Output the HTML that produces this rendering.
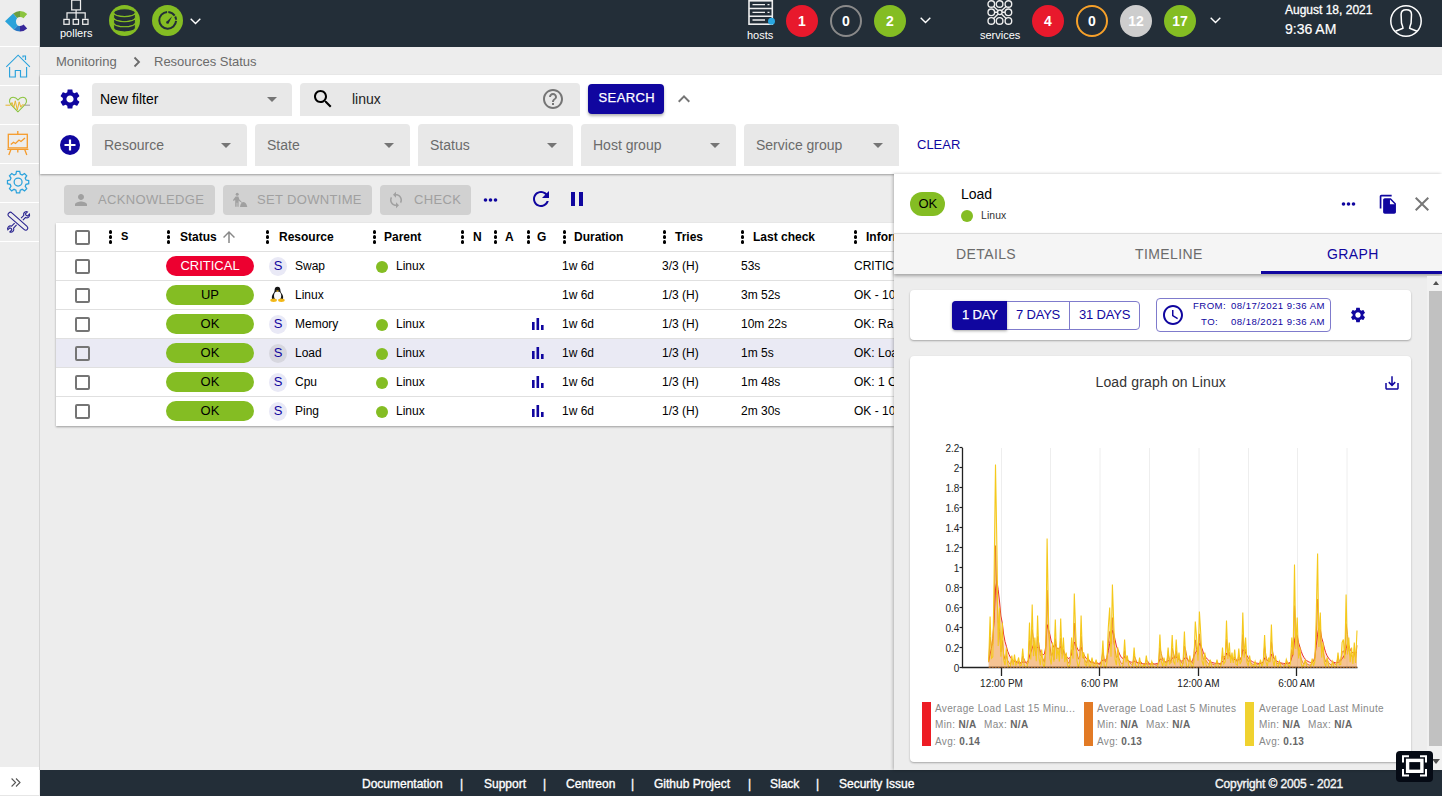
<!DOCTYPE html>
<html><head><meta charset="utf-8">
<style>
*{box-sizing:border-box;margin:0;padding:0}
html,body{width:1442px;height:796px;overflow:hidden;background:#ededed;font-family:"Liberation Sans",sans-serif;color:#000}
.a{position:absolute}
.t{position:absolute;white-space:nowrap;line-height:1}
#top{left:40px;top:0;width:1402px;height:47px;background:#232e38}
#side{left:0;top:0;width:40px;height:770px;background:#ededed;border-right:1px solid #d6d6d6}
.sep{position:absolute;left:0;width:39px;height:1.3px;background:#fff}
.circ{position:absolute;border-radius:50%;color:#fff;font-weight:bold;font-size:14px;text-align:center}
#filters{left:40px;top:75px;width:1402px;height:99px;background:#fff;box-shadow:0 1px 2px rgba(0,0,0,.35)}
.inp{position:absolute;background:#e8e8e8;border-radius:4px 4px 0 0}
.caret{position:absolute;width:0;height:0;border-left:5px solid transparent;border-right:5px solid transparent;border-top:5px solid #757575}
.btn{position:absolute;background:#d1d1d1;border-radius:4px;color:#a6a6a6;font-size:13px}
#table{left:56px;top:223px;width:838px;height:203px;background:#fff;box-shadow:0 1px 2px rgba(0,0,0,.35)}
.row{position:absolute;left:0;width:838px;height:29px;border-top:1px solid #e0e0e0}
.cb{position:absolute;width:15px;height:15px;border:2px solid #757575;border-radius:2px}
.hd{position:absolute;font-weight:bold;font-size:12px;line-height:1}
.dots{position:absolute;width:4px;height:14px}
.dots i{position:absolute;left:0;width:3.3px;height:3.3px;border-radius:50%;background:#000}
.chip{position:absolute;left:110px;width:88px;height:20px;border-radius:10px;text-align:center;font-size:13px;line-height:20px}
.sav{position:absolute;width:18px;height:19px;border-radius:50%;background:#e9e9f6;color:#10069f;font-size:13px;text-align:center;line-height:17.3px}
.cell{position:absolute;font-size:12px;line-height:1;color:#000;white-space:nowrap}
.gdot{position:absolute;width:12px;height:12px;border-radius:50%;background:#84bd23}
#panel{left:894px;top:174px;width:548px;height:596px;background:#ededed;box-shadow:-1px 0 3px rgba(0,0,0,.25)}
.lg{font-size:10px;color:#888;letter-spacing:.35px}
.lg b{color:#666}
.ft{font-size:12px;color:#fff;-webkit-text-stroke:.35px #fff}
.ax{font-size:10px;color:#222}
#footer{left:40px;top:770px;width:1402px;height:26px;background:#232e38}
</style></head><body>

<!-- sidebar -->
<div id="side" class="a">
  <div class="sep" style="top:45.8px"></div>
  <div class="sep" style="top:84.8px"></div>
  <div class="sep" style="top:123.8px"></div>
  <div class="sep" style="top:162.8px"></div>
  <div class="sep" style="top:201.8px"></div>
  <div class="sep" style="top:240.8px"></div>
</div>
<svg class="a" style="left:0;top:46px" width="40" height="40" viewBox="0 0 40 40">
  <g fill="none" stroke="#2aa2dc" stroke-width="1.15">
    <path d="M6.3 20.8 L18.1 9.2 L29.9 20.8"/>
    <path d="M23 11.5 V10 H25.5 V14"/>
    <path d="M9.6 21 V31 H15.3 V24.5 H20.5 V31 H26.6 V21"/>
  </g>
</svg>
<svg class="a" style="left:0;top:86px" width="40" height="40" viewBox="0 0 40 40">
  <path d="M18 25.8 L10.8 18.5 C8.2 15.5 9.6 11.2 13.2 11.2 C15.6 11.2 17 12.6 18 14 C19 12.6 20.4 11.2 22.8 11.2 C26.4 11.2 27.8 15.5 25.2 18.5 Z" fill="none" stroke="#8cc43f" stroke-width="1.1"/>
  <path d="M5.5 19.2 H10.3 L12 16.5 L13.8 21.5 L15.3 14.8 L17.3 24 L19.2 15.8 L20.8 21.2 L22.3 18.8 L24.5 19.2" fill="none" stroke="#e6b52c" stroke-width="1"/>
  <path d="M24.5 19.2 H30" fill="none" stroke="#a0a0a0" stroke-width="1.1"/>
</svg>
<svg class="a" style="left:0;top:124px" width="40" height="40" viewBox="0 0 40 40">
  <g fill="none" stroke="#f59b2b" stroke-width="1.3">
    <rect x="8.3" y="10.3" width="19" height="13.6"/>
    <path d="M17.8 7 V10.3 M7.2 25.3 H28.4 M11 25.3 L8.8 31 M24.6 25.3 L26.8 31 M17.8 25.3 V28.5"/>
    <path d="M10.8 20.5 L13.5 18.3 L15.5 19.5 L19 16 L21 17.5 L25 14"/>
  </g>
</svg>
<svg class="a" style="left:0;top:163px" width="40" height="40" viewBox="0 0 40 40">
  <g transform="translate(18.1 19.1) scale(0.9) translate(-18.1 -20.2)"><g fill="none" stroke="#2aa2dc" stroke-width="1.4">
    <path d="M16.3 8.3 H19.9 L20.5 11.3 L22.6 12.3 L25.2 10.6 L27.7 13.1 L26 15.7 L26.9 17.9 L29.9 18.5 V22 L26.9 22.6 L26 24.8 L27.7 27.4 L25.2 29.9 L22.6 28.2 L20.5 29.1 L19.9 32.1 H16.3 L15.7 29.1 L13.6 28.2 L11 29.9 L8.5 27.4 L10.2 24.8 L9.3 22.6 L6.3 22 V18.5 L9.3 17.9 L10.2 15.7 L8.5 13.1 L11 10.6 L13.6 12.3 L15.7 11.3 Z"/>
    <circle cx="18.1" cy="20.2" r="4.4"/>
  </g>
</g></svg>
<svg class="a" style="left:0;top:202px" width="40" height="40" viewBox="0 0 40 40">
  <g transform="translate(18.3 19.3) scale(0.92) translate(-18.5 -18.5)"><g fill="none" stroke="#2b2590" stroke-width="1.2">
    <path d="M8.2 9.5 C7 10.5 7 11.8 8 12.8 L25 27.5 C26.2 28.5 27.5 28.3 28.3 27.3 C29.2 26.3 29 25 28 24 L11.5 9.3 C10.5 8.3 9.2 8.5 8.2 9.5 Z"/>
    <path d="M21.5 15 L24.5 12 C24 10.5 24.5 9 25.8 8.3 C26.8 7.8 27.8 7.9 28.5 8.3 L26.2 10.5 L27 12 L28.6 12.8 L30.6 10.6 C31 11.7 30.8 13 29.8 13.9 C28.8 14.8 27.5 15 26.3 14.4 L23.5 17.2"/>
    <path d="M14.5 20.5 L11.2 23.8 C10 23.3 8.6 23.6 7.7 24.5 C6.8 25.5 6.6 26.8 7.1 27.8 L9.2 25.7 L10.8 26.3 L11.5 27.9 L9.4 30 C10.5 30.5 11.8 30.3 12.7 29.4 C13.6 28.5 13.9 27.2 13.4 26 L16.6 22.5"/>
  </g>
</g></svg>
<div class="a" style="left:0;top:767px;width:39px;height:29px;background:#fff;border-bottom:1px solid #e6e6e6"></div>

<!-- top bar -->
<div id="top" class="a"></div>
<!-- logo -->
<svg class="a" style="left:0;top:0" width="36" height="40" viewBox="0 0 36 40">
  <path d="M5 21.3 L13.2 13.6 L17.2 18 Q15.9 19.6 15.9 21.5 Q15.9 23.8 17.8 25.4 L13.8 29.8 Z" fill="#2aa3da"/>
  <path d="M13.2 13.6 Q16.3 11.2 20 10.9 L20 17 Q18.3 17.1 17.2 18 Z" fill="#6a9e3f"/>
  <path d="M20 10.9 Q24.2 10.9 27.2 13.9 L23.5 18.3 Q22.1 17 20 17 Z" fill="#8cc43f"/>
  <path d="M17.8 25.4 Q18.8 26 20 26.1 L20 31.6 Q16.5 31.6 13.8 29.8 Z" fill="#2777c4"/>
  <path d="M20 26.1 Q22.3 26 23.6 24.6 L27.2 28.6 Q24.2 31.6 20 31.6 Z" fill="#37289a"/>
</svg>
<!-- pollers -->
<svg class="a" style="left:62px;top:0" width="28" height="26" viewBox="0 0 28 26">
  <g fill="none" stroke="#eeeeee" stroke-width="1.25">
    <rect x="9.7" y="0.1" width="8.8" height="9.8"/>
    <path d="M14.1 10 V12.8 M5 18.8 V12.8 H23.2 V18.8 M14.1 12.8 V18.8"/>
    <rect x="1.9" y="19.4" width="5.3" height="4.9"/>
    <rect x="11.2" y="19.4" width="5.3" height="4.9"/>
    <rect x="20.7" y="19.4" width="5.3" height="4.9"/>
  </g>
</svg>
<div class="t" style="left:60px;top:28px;font-size:11px;color:#fff">pollers</div>
<!-- db -->
<div class="circ" style="left:109px;top:5px;width:31px;height:31px;background:#84bd23"></div>
<svg class="a" style="left:109px;top:5px" width="31" height="31" viewBox="0 0 31 31"><g fill="#232e38" stroke="#84bd23" stroke-width="1.05"><ellipse cx="15.5" cy="7.7" rx="10.9" ry="3.9"/><path d="M4.6 7.7 A10.9 3.9 0 0 0 26.4 7.7 L26.4 12.8 A10.9 3.9 0 0 1 4.6 12.8 Z"/><path d="M4.6 12.8 A10.9 3.9 0 0 0 26.4 12.8 L26.4 17.9 A10.9 3.9 0 0 1 4.6 17.9 Z"/><path d="M4.6 17.9 A10.9 3.9 0 0 0 26.4 17.9 L26.4 23.1 A10.9 3.9 0 0 1 4.6 23.1 Z"/></g></svg>
<!-- gauge -->
<div class="circ" style="left:152px;top:5px;width:31px;height:31px;background:#84bd23"></div>
<svg class="a" style="left:152px;top:5px" width="31" height="31" viewBox="0 0 31 31"><path d="M16.29 6.92 A8.4 8.4 0 0 1 22.66 10.60 M23.18 11.49 A8.4 8.4 0 0 1 24.08 14.71 M24.08 15.89 A8.4 8.4 0 1 1 15.11 6.92 " fill="none" stroke="#232e38" stroke-width="2"/><path d="M14.3 16.9 L20.2 11.2 L16.6 18.4 Z" fill="#232e38"/><circle cx="15.5" cy="17.5" r="1.3" fill="#232e38"/></svg>
<svg class="a" style="left:190px;top:18px" width="11" height="7" viewBox="0 0 11 7"><path d="M0.7 0.7 L5.5 5.5 L10.3 0.7" fill="none" stroke="#fff" stroke-width="1.4"/></svg>

<!-- hosts -->
<svg class="a" style="left:746px;top:0" width="30" height="26" viewBox="0 0 30 26">
  <g fill="none" stroke="#eeeeee" stroke-width="1.6">
    <rect x="3" y="0.8" width="23.3" height="23.4"/>
    <path d="M3 8.5 H26.5 M3 16.3 H26.5"/>
  </g>
  <g stroke="#eeeeee" stroke-width="1.3">
    <path d="M6.5 4.7 H19 M6.5 12.4 H19 M6.5 20 H19"/>
    <path d="M21.5 4.7 H23.5 M21.5 12.4 H23.5"/>
  </g>
  <circle cx="25.5" cy="21.2" r="3.5" fill="#29a6e0"/>
</svg>
<div class="t" style="left:747px;top:30px;font-size:11px;color:#fff">hosts</div>
<div class="circ" style="left:786px;top:5px;width:32px;height:32px;background:#e8192c;line-height:32px">1</div>
<div class="circ" style="left:830px;top:5px;width:32px;height:32px;border:2px solid #8a8a8a;line-height:29px">0</div>
<div class="circ" style="left:874px;top:5px;width:32px;height:32px;background:#84bd23;line-height:32px">2</div>
<svg class="a" style="left:920px;top:17px" width="11" height="7" viewBox="0 0 11 7"><path d="M0.7 0.7 L5.5 5.5 L10.3 0.7" fill="none" stroke="#fff" stroke-width="1.4"/></svg>

<!-- services -->
<svg class="a" style="left:985px;top:0" width="30" height="26" viewBox="0 0 30 26">
  <g fill="none" stroke="#eeeeee" stroke-width="1.4">
    <circle cx="6.3" cy="4" r="3.3"/><circle cx="14.6" cy="4" r="3.3"/><circle cx="23.4" cy="4" r="3.3"/>
    <circle cx="6.3" cy="12.3" r="3.3"/><circle cx="23.4" cy="12.3" r="3.3"/>
    <circle cx="6.3" cy="20.9" r="3.3"/><circle cx="14.6" cy="20.9" r="3.3"/><circle cx="23.4" cy="20.9" r="3.3"/>
    <circle cx="14.8" cy="12.3" r="2.3"/>
    <path d="M8.6 6.5 L12.9 10.5 M21.1 6.5 L16.7 10.5 M9.6 12.3 H12.5 M20.1 12.3 H17.1 M8.6 18.5 L12.9 14.2 M21.1 18.5 L16.7 14.2"/>
  </g>
</svg>
<div class="t" style="left:980px;top:30px;font-size:11px;color:#fff">services</div>
<div class="circ" style="left:1032px;top:5px;width:32px;height:32px;background:#e8192c;line-height:32px">4</div>
<div class="circ" style="left:1076px;top:5px;width:32px;height:32px;border:2px solid #f7a12a;line-height:29px">0</div>
<div class="circ" style="left:1120px;top:5px;width:32px;height:32px;background:#cdcdcd;line-height:32px">12</div>
<div class="circ" style="left:1164px;top:5px;width:32px;height:32px;background:#84bd23;line-height:32px">17</div>
<svg class="a" style="left:1210px;top:17px" width="11" height="7" viewBox="0 0 11 7"><path d="M0.7 0.7 L5.5 5.5 L10.3 0.7" fill="none" stroke="#fff" stroke-width="1.4"/></svg>

<!-- date -->
<div class="t" style="left:1285px;top:3.6px;font-size:12px;color:#fff;-webkit-text-stroke:.3px #fff">August 18, 2021</div>
<div class="t" style="left:1285px;top:22px;font-size:14px;color:#fff;-webkit-text-stroke:.2px #fff">9:36 AM</div>
<!-- user -->
<svg class="a" style="left:1389px;top:4px" width="34" height="34" viewBox="0 0 34 34">
  <circle cx="17" cy="17" r="15.2" fill="none" stroke="#fff" stroke-width="1.5"/>
  <path d="M6.5 27.3 L14 24.2 C14 22.5 13 21 12.5 19 L12.1 10.5 C12.1 7.3 14 5.8 17.3 5.8 C20.6 5.8 22.5 7.3 22.5 10.5 L22.1 19 C21.6 21 20.6 22.5 20.6 24.2 L28.1 27.3" fill="none" stroke="#fff" stroke-width="1.5" stroke-linejoin="round"/>
</svg>

<!-- breadcrumb -->
<div class="t" style="left:56px;top:55px;font-size:13px;color:#6b6b6b">Monitoring</div>
<div class="t" style="left:154px;top:55px;font-size:13px;color:#6b6b6b">Resources Status</div>

<!-- filters -->
<div id="filters" class="a"></div>
<svg class="a" style="left:132.5px;top:55.5px" width="8" height="12" viewBox="0 0 8 12"><path d="M1.5 1.5 L6 6 L1.5 10.5" fill="none" stroke="#6b6b6b" stroke-width="1.8"/></svg>
<!-- gear -->
<svg class="a" style="left:58px;top:87px" width="24" height="24" viewBox="0 0 24 24"><path fill="#10069f" d="M19.14 12.94c.04-.3.06-.61.06-.94 0-.32-.02-.64-.07-.94l2.03-1.58c.18-.14.23-.41.12-.61l-1.92-3.32c-.12-.22-.37-.29-.59-.22l-2.39.96c-.5-.38-1.03-.7-1.62-.94l-.36-2.54c-.04-.24-.24-.41-.48-.41h-3.84c-.24 0-.43.17-.47.41l-.36 2.54c-.59.24-1.13.57-1.62.94l-2.39-.96c-.22-.08-.47 0-.59.22L2.74 8.87c-.12.21-.08.47.12.61l2.03 1.58c-.05.3-.09.63-.09.94s.02.64.07.94l-2.03 1.58c-.18.14-.23.41-.12.61l1.92 3.32c.12.22.37.29.59.22l2.39-.96c.5.38 1.03.7 1.62.94l.36 2.54c.05.24.24.41.48.41h3.84c.24 0 .44-.17.47-.41l.36-2.54c.59-.24 1.13-.56 1.62-.94l2.39.96c.22.08.47 0 .59-.22l1.92-3.32c.12-.22.07-.47-.12-.61l-2.01-1.58zM12 15.6c-1.98 0-3.6-1.62-3.6-3.6s1.62-3.6 3.6-3.6 3.6 1.62 3.6 3.6-1.62 3.6-3.6 3.6z"/></svg>
<div class="inp" style="left:92px;top:83px;width:200px;height:33px"></div>
<div class="t" style="left:100px;top:92px;font-size:14px;color:#000">New filter</div>
<div class="caret" style="left:267px;top:97px"></div>
<div class="inp" style="left:300px;top:83px;width:280px;height:33px"></div>
<svg class="a" style="left:311px;top:87px" width="24" height="24" viewBox="0 0 24 24"><path fill="#000" d="M15.5 14h-.79l-.28-.27C15.41 12.59 16 11.11 16 9.5 16 5.91 13.09 3 9.5 3S3 5.91 3 9.5 5.91 16 9.5 16c1.61 0 3.09-.59 4.23-1.57l.27.28v.79l5 4.99L20.49 19l-4.99-5zm-6 0C7.01 14 5 11.99 5 9.5S7.01 5 9.5 5 14 7.01 14 9.5 11.99 14 9.5 14z"/></svg>
<div class="t" style="left:352px;top:92px;font-size:14px;color:#222">linux</div>
<svg class="a" style="left:541px;top:87px" width="24" height="24" viewBox="0 0 24 24"><path fill="#757575" d="M11 18h2v-2h-2v2zm1-16C6.48 2 2 6.48 2 12s4.48 10 10 10 10-4.48 10-10S17.52 2 12 2zm0 18c-4.41 0-8-3.59-8-8s3.59-8 8-8 8 3.59 8 8-3.59 8-8 8zm0-14c-2.21 0-4 1.79-4 4h2c0-1.1.9-2 2-2s2 .9 2 2c0 2-3 1.75-3 5h2c0-2.25 3-2.5 3-5 0-2.21-1.79-4-4-4z"/></svg>
<div class="a" style="left:588px;top:84px;width:76px;height:30px;background:#10069f;border-radius:4px;box-shadow:0 2px 3px rgba(0,0,0,.3)"></div>
<div class="t" style="left:598.5px;top:91.2px;font-size:13px;color:#fff;letter-spacing:.4px;-webkit-text-stroke:.25px #fff">SEARCH</div>
<svg class="a" style="left:672px;top:87px" width="24" height="24" viewBox="0 0 24 24"><path fill="#757575" d="M7.41 15.41L12 10.83l4.59 4.58L18 14l-6-6-6 6z"/></svg>

<!-- plus -->
<div class="a" style="left:60px;top:135px;width:20px;height:20px;border-radius:50%;background:#10069f"></div>
<svg class="a" style="left:60px;top:135px" width="20" height="20" viewBox="0 0 20 20"><path d="M10 4.5 V15.5 M4.5 10 H15.5" stroke="#fff" stroke-width="2.2"/></svg>
<div class="inp" style="left:92px;top:124px;width:155px;height:42px"></div>
<div class="t" style="left:104px;top:138px;font-size:14px;color:#6b6b6b">Resource</div>
<div class="caret" style="left:221px;top:143px"></div>
<div class="inp" style="left:255px;top:124px;width:155px;height:42px"></div>
<div class="t" style="left:267px;top:138px;font-size:14px;color:#6b6b6b">State</div>
<div class="caret" style="left:384px;top:143px"></div>
<div class="inp" style="left:418px;top:124px;width:155px;height:42px"></div>
<div class="t" style="left:430px;top:138px;font-size:14px;color:#6b6b6b">Status</div>
<div class="caret" style="left:547px;top:143px"></div>
<div class="inp" style="left:581px;top:124px;width:155px;height:42px"></div>
<div class="t" style="left:593px;top:138px;font-size:14px;color:#6b6b6b">Host group</div>
<div class="caret" style="left:710px;top:143px"></div>
<div class="inp" style="left:744px;top:124px;width:155px;height:42px"></div>
<div class="t" style="left:756px;top:138px;font-size:14px;color:#6b6b6b">Service group</div>
<div class="caret" style="left:873px;top:143px"></div>
<div class="t" style="left:917px;top:138px;font-size:13px;color:#10069f">CLEAR</div>

<!-- toolbar -->
<div class="btn" style="left:64px;top:185px;width:151px;height:30px"></div>
<svg class="a" style="left:72px;top:191.4px" width="18" height="18" viewBox="0 0 24 24"><path fill="#a0a0a0" d="M12 12c2.21 0 4-1.79 4-4s-1.79-4-4-4-4 1.79-4 4 1.79 4 4 4zm0 2c-2.67 0-8 1.34-8 4v2h16v-2c0-2.66-5.33-4-8-4z"/></svg>
<div class="t" style="left:98px;top:192.7px;font-size:13px;color:#a0a0a0;letter-spacing:.33px">ACKNOWLEDGE</div>
<div class="btn" style="left:223px;top:185px;width:149px;height:30px"></div>
<svg class="a" style="left:230px;top:191px" width="20" height="18" viewBox="0 0 20 18"><g fill="#a0a0a0"><circle cx="7.2" cy="3.3" r="1.5"/><path d="M5.6 5.4 H8.4 L9.6 9 L11 10.3 L10.3 11 L8.6 9.6 V15.8 H7.4 V11.8 H6.6 V15.8 H5.2 V9 L3.5 10 L3 9 Z"/><path d="M10 16 Q10.5 11.5 13.5 11 Q16.5 11.5 17.3 16 Z"/><path d="M8.5 8.5 L13 12.5" stroke="#a0a0a0" stroke-width="0.9"/></g></svg>
<div class="t" style="left:257px;top:192.7px;font-size:13px;color:#a0a0a0;letter-spacing:.33px">SET DOWNTIME</div>
<div class="btn" style="left:380px;top:185px;width:91px;height:30px"></div>
<svg class="a" style="left:387px;top:191px" width="18" height="18" viewBox="0 0 24 24"><path fill="#a0a0a0" d="M12 4V1L8 5l4 4V6c3.31 0 6 2.69 6 6 0 1.01-.25 1.97-.7 2.8l1.46 1.46C19.54 15.03 20 13.57 20 12c0-4.42-3.58-8-8-8zm0 14c-3.31 0-6-2.69-6-6 0-1.01.25-1.97.7-2.8L5.24 7.74C4.46 8.97 4 10.43 4 12c0 4.42 3.58 8 8 8v3l4-4-4-4v3z"/></svg>
<div class="t" style="left:414px;top:192.7px;font-size:13px;color:#a0a0a0;letter-spacing:.33px">CHECK</div>
<svg class="a" style="left:483px;top:197px" width="16" height="6" viewBox="0 0 16 6"><g fill="#10069f"><circle cx="2.5" cy="3" r="1.8"/><circle cx="7.5" cy="3" r="1.8"/><circle cx="12.5" cy="3" r="1.8"/></g></svg>
<svg class="a" style="left:529px;top:187px" width="24" height="24" viewBox="0 0 24 24"><path fill="#10069f" d="M17.65 6.35C16.2 4.9 14.21 4 12 4c-4.42 0-7.99 3.58-7.99 8s3.57 8 7.99 8c3.73 0 6.84-2.55 7.73-6h-2.08c-.82 2.33-3.04 4-5.65 4-3.31 0-6-2.69-6-6s2.69-6 6-6c1.66 0 3.14.69 4.22 1.78L13 11h7V4l-2.35 2.35z"/></svg>
<div class="a" style="left:571px;top:192px;width:4px;height:14px;background:#10069f"></div>
<div class="a" style="left:579px;top:192px;width:4px;height:14px;background:#10069f"></div>

<!-- table -->
<div id="table" class="a">

<div class="cb" style="left:19px;top:6.6px"></div>
<div class="dots" style="left:53.0px;top:7.3px"><i style="top:0"></i><i style="top:5.1px"></i><i style="top:10.2px"></i></div>
<div class="hd" style="left:65px;top:8px;font-size:11px">S</div>
<div class="dots" style="left:111.0px;top:7.3px"><i style="top:0"></i><i style="top:5.1px"></i><i style="top:10.2px"></i></div>
<div class="hd" style="left:124px;top:8px">Status</div>
<div class="dots" style="left:210.0px;top:7.3px"><i style="top:0"></i><i style="top:5.1px"></i><i style="top:10.2px"></i></div>
<div class="hd" style="left:223px;top:8px">Resource</div>
<div class="dots" style="left:317.0px;top:7.3px"><i style="top:0"></i><i style="top:5.1px"></i><i style="top:10.2px"></i></div>
<div class="hd" style="left:328px;top:8px">Parent</div>
<div class="dots" style="left:405.0px;top:7.3px"><i style="top:0"></i><i style="top:5.1px"></i><i style="top:10.2px"></i></div>
<div class="hd" style="left:417px;top:8px">N</div>
<div class="dots" style="left:438.0px;top:7.3px"><i style="top:0"></i><i style="top:5.1px"></i><i style="top:10.2px"></i></div>
<div class="hd" style="left:449px;top:8px">A</div>
<div class="dots" style="left:471.0px;top:7.3px"><i style="top:0"></i><i style="top:5.1px"></i><i style="top:10.2px"></i></div>
<div class="hd" style="left:481px;top:8px">G</div>
<div class="dots" style="left:507.0px;top:7.3px"><i style="top:0"></i><i style="top:5.1px"></i><i style="top:10.2px"></i></div>
<div class="hd" style="left:518px;top:8px">Duration</div>
<div class="dots" style="left:607.0px;top:7.3px"><i style="top:0"></i><i style="top:5.1px"></i><i style="top:10.2px"></i></div>
<div class="hd" style="left:619px;top:8px">Tries</div>
<div class="dots" style="left:685.0px;top:7.3px"><i style="top:0"></i><i style="top:5.1px"></i><i style="top:10.2px"></i></div>
<div class="hd" style="left:697px;top:8px">Last check</div>
<div class="dots" style="left:798.0px;top:7.3px"><i style="top:0"></i><i style="top:5.1px"></i><i style="top:10.2px"></i></div>
<div class="hd" style="left:810px;top:8px">Information</div>
<svg class="a" style="left:164.3px;top:5.2px" width="18" height="18" viewBox="0 0 24 24"><path fill="#888" d="M4 12l1.41 1.41L11 7.83V20h2V7.83l5.58 5.59L20 12l-8-8-8 8z"/></svg>
<div class="row" style="top:28px;">
<div class="cb" style="left:19px;top:7px"></div>
<div class="chip" style="top:4px;background:#ed0030;color:#fff">CRITICAL</div>
<div class="sav" style="left:213px;top:5px;background:#e9e9f6">S</div>
<div class="cell" style="left:239px;top:8px">Swap</div>
<div class="gdot" style="left:320px;top:9px"></div>
<div class="cell" style="left:340px;top:8px">Linux</div>
<div class="cell" style="left:506px;top:8px">1w 6d</div>
<div class="cell" style="left:606px;top:8px">3/3 (H)</div>
<div class="cell" style="left:685px;top:8px">53s</div>
<div class="cell" style="left:798px;top:8px">CRITIC</div>
</div>
<div class="row" style="top:57px;">
<div class="cb" style="left:19px;top:7px"></div>
<div class="chip" style="top:4px;background:#84bd23;color:#000">UP</div>
<svg class="a" style="left:214px;top:5px" width="16" height="17" viewBox="0 0 16 17"><path d="M7.5 0.8 C5.3 0.8 4.6 2.6 4.6 4.3 C4.6 5.8 3.8 6.8 2.8 8.3 C1.8 9.8 1.5 11.8 2.3 13.5 L12.7 13.5 C13.5 11.8 13.2 9.8 12.2 8.3 C11.2 6.8 10.4 5.8 10.4 4.3 C10.4 2.6 9.7 0.8 7.5 0.8 Z" fill="#151515"/><ellipse cx="7.6" cy="9.8" rx="3.6" ry="4.3" fill="#fafafa"/><ellipse cx="3.6" cy="14.3" rx="3.3" ry="1.7" fill="#f2b818"/><ellipse cx="11.4" cy="14.3" rx="3.3" ry="1.7" fill="#f2b818"/><path d="M6 4.6 L9 4.6 L7.5 6.1 Z" fill="#f2b818"/></svg>
<div class="cell" style="left:239px;top:8px">Linux</div>
<div class="cell" style="left:506px;top:8px">1w 6d</div>
<div class="cell" style="left:606px;top:8px">1/3 (H)</div>
<div class="cell" style="left:685px;top:8px">3m 52s</div>
<div class="cell" style="left:798px;top:8px">OK - 10</div>
</div>
<div class="row" style="top:86px;">
<div class="cb" style="left:19px;top:7px"></div>
<div class="chip" style="top:4px;background:#84bd23;color:#000">OK</div>
<div class="sav" style="left:213px;top:5px;background:#e9e9f6">S</div>
<div class="cell" style="left:239px;top:8px">Memory</div>
<div class="gdot" style="left:320px;top:9px"></div>
<div class="cell" style="left:340px;top:8px">Linux</div>
<svg class="a" style="left:476px;top:8px" width="12" height="12" viewBox="0 0 12 12"><g fill="#10069f"><rect x="0" y="4" width="2.6" height="8"/><rect x="4.5" y="0" width="2.6" height="12"/><rect x="9" y="7" width="2.6" height="5"/></g></svg>
<div class="cell" style="left:506px;top:8px">1w 6d</div>
<div class="cell" style="left:606px;top:8px">1/3 (H)</div>
<div class="cell" style="left:685px;top:8px">10m 22s</div>
<div class="cell" style="left:798px;top:8px">OK: Ra</div>
</div>
<div class="row" style="top:115px;background:#eaeaf4;">
<div class="cb" style="left:19px;top:7px"></div>
<div class="chip" style="top:4px;background:#84bd23;color:#000">OK</div>
<div class="sav" style="left:213px;top:5px;background:#d7d7df">S</div>
<div class="cell" style="left:239px;top:8px">Load</div>
<div class="gdot" style="left:320px;top:9px"></div>
<div class="cell" style="left:340px;top:8px">Linux</div>
<svg class="a" style="left:476px;top:8px" width="12" height="12" viewBox="0 0 12 12"><g fill="#10069f"><rect x="0" y="4" width="2.6" height="8"/><rect x="4.5" y="0" width="2.6" height="12"/><rect x="9" y="7" width="2.6" height="5"/></g></svg>
<div class="cell" style="left:506px;top:8px">1w 6d</div>
<div class="cell" style="left:606px;top:8px">1/3 (H)</div>
<div class="cell" style="left:685px;top:8px">1m 5s</div>
<div class="cell" style="left:798px;top:8px">OK: Loa</div>
</div>
<div class="row" style="top:144px;">
<div class="cb" style="left:19px;top:7px"></div>
<div class="chip" style="top:4px;background:#84bd23;color:#000">OK</div>
<div class="sav" style="left:213px;top:5px;background:#e9e9f6">S</div>
<div class="cell" style="left:239px;top:8px">Cpu</div>
<div class="gdot" style="left:320px;top:9px"></div>
<div class="cell" style="left:340px;top:8px">Linux</div>
<svg class="a" style="left:476px;top:8px" width="12" height="12" viewBox="0 0 12 12"><g fill="#10069f"><rect x="0" y="4" width="2.6" height="8"/><rect x="4.5" y="0" width="2.6" height="12"/><rect x="9" y="7" width="2.6" height="5"/></g></svg>
<div class="cell" style="left:506px;top:8px">1w 6d</div>
<div class="cell" style="left:606px;top:8px">1/3 (H)</div>
<div class="cell" style="left:685px;top:8px">1m 48s</div>
<div class="cell" style="left:798px;top:8px">OK: 1 C</div>
</div>
<div class="row" style="top:173px;">
<div class="cb" style="left:19px;top:7px"></div>
<div class="chip" style="top:4px;background:#84bd23;color:#000">OK</div>
<div class="sav" style="left:213px;top:5px;background:#e9e9f6">S</div>
<div class="cell" style="left:239px;top:8px">Ping</div>
<div class="gdot" style="left:320px;top:9px"></div>
<div class="cell" style="left:340px;top:8px">Linux</div>
<svg class="a" style="left:476px;top:8px" width="12" height="12" viewBox="0 0 12 12"><g fill="#10069f"><rect x="0" y="4" width="2.6" height="8"/><rect x="4.5" y="0" width="2.6" height="12"/><rect x="9" y="7" width="2.6" height="5"/></g></svg>
<div class="cell" style="left:506px;top:8px">1w 6d</div>
<div class="cell" style="left:606px;top:8px">1/3 (H)</div>
<div class="cell" style="left:685px;top:8px">2m 30s</div>
<div class="cell" style="left:798px;top:8px">OK - 10</div>
</div>
</div>

<!-- footer -->
<div id="footer" class="a"></div>
<div class="t ft" style="left:362px;top:778.2px">Documentation</div>
<div class="t ft" style="left:460px;top:778.2px">|</div>
<div class="t ft" style="left:484px;top:778.2px">Support</div>
<div class="t ft" style="left:543px;top:778.2px">|</div>
<div class="t ft" style="left:566px;top:778.2px">Centreon</div>
<div class="t ft" style="left:631px;top:778.2px">|</div>
<div class="t ft" style="left:654px;top:778.2px">Github Project</div>
<div class="t ft" style="left:748px;top:778.2px">|</div>
<div class="t ft" style="left:770px;top:778.2px">Slack</div>
<div class="t ft" style="left:816px;top:778.2px">|</div>
<div class="t ft" style="left:839px;top:778.2px">Security Issue</div>
<div class="t ft" style="left:1215px;top:778.2px;letter-spacing:-.12px;color:#eee">Copyright &copy; 2005 - 2021</div>
<svg class="a" style="left:9px;top:776px" width="14" height="14" viewBox="0 0 14 14"><path d="M2.6 2.5 L6.6 6.5 L2.6 10.5 M7 2.5 L11 6.5 L7 10.5" fill="none" stroke="#555" stroke-width="1.1"/></svg>

<!-- panel -->
<div id="panel" class="a"></div>
<div class="a" style="left:894px;top:174px;width:548px;height:59px;background:#fff"></div>
<div class="a" style="left:910px;top:192px;width:35px;height:24px;border-radius:12px;background:#84bd23"></div>
<div class="t" style="left:918.5px;top:197px;font-size:13px;color:#000">OK</div>
<div class="t" style="left:961px;top:187.2px;font-size:14px;color:#000">Load</div>
<div class="gdot" style="left:961px;top:210px"></div>
<div class="t" style="left:981px;top:211px;font-size:10.4px;color:#333;letter-spacing:.1px">Linux</div>
<svg class="a" style="left:1340.6px;top:201px" width="16" height="6" viewBox="0 0 16 6"><g fill="#10069f"><circle cx="2.5" cy="3" r="1.8"/><circle cx="7.5" cy="3" r="1.8"/><circle cx="12.5" cy="3" r="1.8"/></g></svg>
<svg class="a" style="left:1378.3px;top:194px" width="20.5" height="20.5" viewBox="0 0 24 24"><path fill="#10069f" d="M16 1H4c-1.1 0-2 .9-2 2v14h2V3h12V1zm-1 4l6 6v10c0 1.1-.9 2-2 2H7.99C6.89 23 6 22.1 6 21l.01-14c0-1.1.89-2 1.99-2h7zm-1 7h5.5L14 6.5V12z"/></svg>
<svg class="a" style="left:1410px;top:192px" width="24" height="24" viewBox="0 0 24 24"><path fill="#777" d="M19 6.41L17.59 5 12 10.59 6.41 5 5 6.41 10.59 12 5 17.59 6.41 19 12 13.41 17.59 19 19 17.59 13.41 12z"/></svg>
<!-- tabs -->
<div class="a" style="left:894px;top:233px;width:548px;height:41px;background:#f5f5f5;border-top:1px solid #dcdcdc;box-shadow:0 2px 3px rgba(0,0,0,.3)"></div>
<div class="t" style="left:956px;top:247px;font-size:14px;color:#6b6b6b;letter-spacing:.4px">DETAILS</div>
<div class="t" style="left:1135px;top:247px;font-size:14px;color:#6b6b6b;letter-spacing:.4px">TIMELINE</div>
<div class="t" style="left:1327px;top:247px;font-size:14px;color:#10069f;letter-spacing:.4px">GRAPH</div>
<div class="a" style="left:1261px;top:271px;width:181px;height:3px;background:#10069f"></div>
<!-- scrollbar -->
<div class="a" style="left:1427px;top:276px;width:15px;height:494px;background:#f1f1f1"></div>
<div class="a" style="left:1429px;top:291px;width:13px;height:455px;background:#c1c1c1"></div>
<div class="caret" style="left:1433px;top:281px;border-top:none;border-bottom:4px solid #505050;border-left-width:3.5px;border-right-width:3.5px"></div>
<div class="caret" style="left:1432px;top:759px;border-top:5px solid #505050;border-left-width:4px;border-right-width:4px"></div>
<!-- controls card -->
<div class="a" style="left:910px;top:290px;width:501px;height:50px;background:#fff;border-radius:4px;box-shadow:0 1px 2px rgba(0,0,0,.3)"></div>
<div class="a" style="left:952px;top:301px;width:188px;height:29px;border:1px solid #7f7bcc;border-radius:4px;background:#fff"></div>
<div class="a" style="left:952px;top:301px;width:55px;height:29px;background:#10069f;border-radius:4px 0 0 4px;box-shadow:0 1px 3px rgba(0,0,0,.35)"></div>
<div class="a" style="left:1069px;top:301px;width:1px;height:29px;background:#7f7bcc"></div>
<div class="t" style="left:962px;top:308px;font-size:13px;color:#fff;letter-spacing:-.2px;-webkit-text-stroke:.25px #fff">1 DAY</div>
<div class="t" style="left:1016px;top:308px;font-size:13px;color:#10069f;letter-spacing:-.2px">7 DAYS</div>
<div class="t" style="left:1079px;top:308px;font-size:13px;color:#10069f;letter-spacing:-.2px">31 DAYS</div>
<div class="a" style="left:1156px;top:298px;width:175px;height:34px;border:1px solid #7f7bcc;border-radius:4px"></div>
<svg class="a" style="left:1161px;top:303px" width="24" height="24" viewBox="0 0 24 24"><path fill="#10069f" d="M11.99 2C6.47 2 2 6.48 2 12s4.47 10 9.99 10C17.52 22 22 17.52 22 12S17.52 2 11.99 2zM12 20c-4.42 0-8-3.58-8-8s3.58-8 8-8 8 3.58 8 8-3.58 8-8 8zm.5-13H11v6l5.25 3.15.75-1.23-4.5-2.67z"/></svg>
<div class="t" style="left:1193px;top:301.2px;font-size:9.6px;color:#10069f;letter-spacing:.45px">FROM:</div>
<div class="t" style="left:1231px;top:301.2px;font-size:9.6px;color:#10069f;letter-spacing:.45px">08/17/2021 9:36 AM</div>
<div class="t" style="left:1201px;top:317.2px;font-size:9.6px;color:#10069f;letter-spacing:.45px">TO:</div>
<div class="t" style="left:1231px;top:317.2px;font-size:9.6px;color:#10069f;letter-spacing:.45px">08/18/2021 9:36 AM</div>
<svg class="a" style="left:1348.5px;top:305.8px" width="18" height="18" viewBox="0 0 24 24"><path fill="#10069f" d="M19.14 12.94c.04-.3.06-.61.06-.94 0-.32-.02-.64-.07-.94l2.03-1.58c.18-.14.23-.41.12-.61l-1.92-3.32c-.12-.22-.37-.29-.59-.22l-2.39.96c-.5-.38-1.03-.7-1.62-.94l-.36-2.54c-.04-.24-.24-.41-.48-.41h-3.84c-.24 0-.43.17-.47.41l-.36 2.54c-.59.24-1.130.57-1.62.94l-2.39-.96c-.22-.08-.47 0-.59.22L2.74 8.87c-.12.21-.08.47.12.61l2.03 1.58c-.05.3-.09.63-.09.94s.02.64.07.94l-2.03 1.58c-.18.14-.23.41-.12.61l1.92 3.32c.12.22.37.29.59.22l2.39-.96c.5.38 1.03.7 1.62.94l.36 2.54c.05.24.24.41.48.41h3.84c.24 0 .44-.17.47-.41l.36-2.54c.59-.24 1.13-.56 1.62-.94l2.39.96c.22.08.47 0 .59-.22l1.92-3.32c.12-.22.07-.47-.12-.61l-2.01-1.58zM12 15.6c-1.98 0-3.6-1.620-3.6-3.6s1.62-3.6 3.6-3.6 3.6 1.62 3.6 3.6-1.62 3.6-3.6 3.6z"/></svg>
<!-- graph card -->
<div class="a" style="left:910px;top:356px;width:501px;height:406px;background:#fff;border-radius:4px;box-shadow:0 1px 2px rgba(0,0,0,.3)"></div>
<div class="t" style="left:1095.5px;top:375.4px;font-size:14px;color:#333;letter-spacing:.15px">Load graph on Linux</div>
<svg class="a" style="left:1383px;top:374px" width="18" height="18" viewBox="0 0 24 24"><path fill="#10069f" d="M19 12v7H5v-7H3v7c0 1.1.9 2 2 2h14c1.1 0 2-.9 2-2v-7h-2zm-6 .67l2.59-2.58L17 11.5l-5 5-5-5 1.41-1.41L11 12.67V3h2z"/></svg>
<div id="chart">
<svg class="a" style="left:0;top:0" width="1442" height="796" viewBox="0 0 1442 796">
<line x1="1001.5" y1="448" x2="1001.5" y2="667" stroke="#eeeeee" stroke-width="1"/>
<line x1="1050.5" y1="448" x2="1050.5" y2="667" stroke="#eeeeee" stroke-width="1"/>
<line x1="1100" y1="448" x2="1100" y2="667" stroke="#eeeeee" stroke-width="1"/>
<line x1="1149.5" y1="448" x2="1149.5" y2="667" stroke="#eeeeee" stroke-width="1"/>
<line x1="1199" y1="448" x2="1199" y2="667" stroke="#eeeeee" stroke-width="1"/>
<line x1="1248.5" y1="448" x2="1248.5" y2="667" stroke="#eeeeee" stroke-width="1"/>
<line x1="1297.5" y1="448" x2="1297.5" y2="667" stroke="#eeeeee" stroke-width="1"/>
<line x1="1347" y1="448" x2="1347" y2="667" stroke="#eeeeee" stroke-width="1"/>
<path d="M988.7 660.8 L990.1 654.0 L991.4 648.6 L992.8 638.5 L994.1 620.6 L995.5 588.9 L996.9 580.5 L998.2 589.7 L999.6 602.0 L1000.9 616.0 L1002.3 622.9 L1003.6 634.0 L1005.0 641.5 L1006.4 646.3 L1007.7 651.2 L1009.1 654.7 L1010.4 657.3 L1011.8 659.1 L1013.2 660.4 L1014.5 661.3 L1015.9 661.9 L1017.2 662.5 L1018.6 662.9 L1020.0 663.0 L1021.3 662.9 L1022.7 662.0 L1024.0 662.0 L1025.4 662.3 L1026.8 662.2 L1028.1 660.9 L1029.5 656.1 L1030.8 652.3 L1032.2 648.0 L1033.5 644.9 L1034.9 645.7 L1036.3 648.6 L1037.6 647.1 L1039.0 647.0 L1040.3 651.3 L1041.7 653.4 L1043.1 654.8 L1044.4 654.0 L1045.8 646.4 L1047.1 624.6 L1048.5 629.6 L1049.9 634.6 L1051.2 640.9 L1052.6 644.5 L1053.9 647.4 L1055.3 644.1 L1056.7 647.6 L1058.0 648.9 L1059.4 648.6 L1060.7 646.5 L1062.1 649.3 L1063.4 650.3 L1064.8 653.8 L1066.2 655.9 L1067.5 657.8 L1068.9 658.6 L1070.2 657.1 L1071.6 654.0 L1073.0 649.2 L1074.3 642.2 L1075.7 644.0 L1077.0 647.6 L1078.4 650.7 L1079.8 650.2 L1081.1 647.0 L1082.5 651.5 L1083.8 654.4 L1085.2 656.9 L1086.6 658.8 L1087.9 659.9 L1089.3 660.8 L1090.6 661.7 L1092.0 662.3 L1093.3 662.8 L1094.7 663.1 L1096.1 663.3 L1097.4 663.5 L1098.8 663.4 L1100.1 663.1 L1101.5 661.6 L1102.9 659.7 L1104.2 660.5 L1105.6 660.2 L1106.9 657.5 L1108.3 650.5 L1109.7 643.4 L1111.0 637.8 L1112.4 630.4 L1113.7 633.5 L1115.1 639.9 L1116.4 646.0 L1117.8 649.4 L1119.2 653.1 L1120.5 656.0 L1121.9 657.8 L1123.2 658.5 L1124.6 656.6 L1126.0 658.3 L1127.3 659.9 L1128.7 661.0 L1130.0 661.8 L1131.4 662.2 L1132.8 662.2 L1134.1 661.1 L1135.5 661.6 L1136.8 662.3 L1138.2 662.7 L1139.6 663.1 L1140.9 663.3 L1142.3 663.5 L1143.6 663.7 L1145.0 663.8 L1146.3 663.8 L1147.7 663.9 L1149.1 663.9 L1150.4 663.9 L1151.8 663.9 L1153.1 663.9 L1154.5 663.9 L1155.9 663.8 L1157.2 663.5 L1158.6 662.5 L1159.9 659.3 L1161.3 659.0 L1162.7 660.4 L1164.0 661.3 L1165.4 661.8 L1166.7 661.8 L1168.1 660.5 L1169.5 661.1 L1170.8 660.8 L1172.2 658.2 L1173.5 657.3 L1174.9 657.1 L1176.2 656.7 L1177.6 658.5 L1179.0 659.3 L1180.3 660.5 L1181.7 661.1 L1183.0 660.8 L1184.4 658.3 L1185.8 657.1 L1187.1 659.0 L1188.5 660.3 L1189.8 661.2 L1191.2 661.4 L1192.6 660.6 L1193.9 656.6 L1195.3 652.7 L1196.6 651.2 L1198.0 648.5 L1199.4 643.5 L1200.7 645.0 L1202.1 648.7 L1203.4 652.8 L1204.8 655.3 L1206.1 657.6 L1207.5 659.3 L1208.9 660.6 L1210.2 661.6 L1211.6 662.2 L1212.9 662.7 L1214.3 663.1 L1215.7 663.3 L1217.0 663.5 L1218.4 663.6 L1219.7 663.5 L1221.1 663.1 L1222.5 661.8 L1223.8 660.2 L1225.2 657.1 L1226.5 653.2 L1227.9 654.9 L1229.3 654.8 L1230.6 657.1 L1232.0 658.2 L1233.3 659.4 L1234.7 659.5 L1236.0 660.1 L1237.4 660.5 L1238.8 659.6 L1240.1 659.5 L1241.5 656.6 L1242.8 649.5 L1244.2 651.4 L1245.6 652.1 L1246.9 655.4 L1248.3 657.8 L1249.6 659.5 L1251.0 660.7 L1252.4 661.6 L1253.7 662.3 L1255.1 662.8 L1256.4 663.1 L1257.8 663.3 L1259.1 663.5 L1260.5 663.5 L1261.9 663.1 L1263.2 661.9 L1264.6 657.8 L1265.9 659.4 L1267.3 660.4 L1268.7 660.7 L1270.0 659.6 L1271.4 654.3 L1272.7 656.2 L1274.1 658.3 L1275.5 659.9 L1276.8 661.0 L1278.2 661.9 L1279.5 662.4 L1280.9 662.9 L1282.3 663.2 L1283.6 663.4 L1285.0 663.6 L1286.3 663.6 L1287.7 663.6 L1289.0 663.2 L1290.4 661.8 L1291.8 657.3 L1293.1 653.1 L1294.5 640.2 L1295.8 635.6 L1297.2 635.5 L1298.6 642.8 L1299.9 647.0 L1301.3 651.5 L1302.6 655.0 L1304.0 657.5 L1305.4 659.3 L1306.7 660.6 L1308.1 661.5 L1309.4 662.1 L1310.8 662.5 L1312.2 662.4 L1313.5 661.2 L1314.9 656.8 L1316.2 645.8 L1317.6 634.2 L1318.9 627.7 L1320.3 629.3 L1321.7 637.9 L1323.0 642.2 L1324.4 648.2 L1325.7 652.6 L1327.1 655.7 L1328.5 658.0 L1329.8 659.7 L1331.2 660.9 L1332.5 661.7 L1333.9 662.3 L1335.3 662.7 L1336.6 662.8 L1338.0 662.2 L1339.3 662.1 L1340.7 660.8 L1342.1 658.7 L1343.4 657.0 L1344.8 654.4 L1346.1 648.6 L1347.5 643.7 L1348.8 645.5 L1350.2 649.4 L1351.6 651.7 L1352.9 652.8 L1354.3 652.5 L1355.6 652.9 L1357.0 652.0 L1357.0 667.5 L988.7 667.5 Z" fill="#ed1c24" fill-opacity="0.13"/>
<path d="M988.7 662.3 L990.1 636.9 L991.4 646.2 L992.8 643.6 L994.1 613.5 L995.5 545.7 L996.9 595.5 L998.2 622.1 L999.6 631.5 L1000.9 651.8 L1002.3 640.5 L1003.6 653.7 L1005.0 659.5 L1006.4 655.5 L1007.7 660.4 L1009.1 662.9 L1010.4 664.2 L1011.8 659.9 L1013.2 661.5 L1014.5 659.7 L1015.9 660.5 L1017.2 663.0 L1018.6 661.5 L1020.0 661.8 L1021.3 663.6 L1022.7 656.1 L1024.0 658.7 L1025.4 662.1 L1026.8 663.8 L1028.1 663.0 L1029.5 640.5 L1030.8 647.7 L1032.2 629.7 L1033.5 639.5 L1034.9 649.5 L1036.3 655.9 L1037.6 636.3 L1039.0 644.4 L1040.3 654.8 L1041.7 656.7 L1043.1 659.1 L1044.4 662.3 L1045.8 648.7 L1047.1 590.1 L1048.5 628.9 L1049.9 646.0 L1051.2 655.6 L1052.6 652.5 L1053.9 659.8 L1055.3 638.7 L1056.7 650.1 L1058.0 653.6 L1059.4 655.1 L1060.7 638.1 L1062.1 654.1 L1063.4 649.5 L1064.8 658.2 L1066.2 657.2 L1067.5 661.3 L1068.9 663.4 L1070.2 658.5 L1071.6 649.5 L1073.0 650.0 L1074.3 623.1 L1075.7 646.5 L1077.0 653.0 L1078.4 659.2 L1079.8 655.9 L1081.1 636.3 L1082.5 652.6 L1083.8 658.2 L1085.2 660.5 L1086.6 663.0 L1087.9 659.1 L1089.3 659.8 L1090.6 662.6 L1092.0 659.6 L1093.3 662.4 L1094.7 663.9 L1096.1 660.9 L1097.4 663.1 L1098.8 664.3 L1100.1 664.5 L1101.5 660.2 L1102.9 651.3 L1104.2 659.0 L1105.6 662.2 L1106.9 659.1 L1108.3 643.5 L1109.7 631.5 L1111.0 643.8 L1112.4 617.7 L1113.7 640.5 L1115.1 649.9 L1116.4 657.6 L1117.8 655.5 L1119.2 658.8 L1120.5 662.1 L1121.9 663.8 L1123.2 662.8 L1124.6 650.6 L1126.0 656.6 L1127.3 660.3 L1128.7 660.4 L1130.0 662.9 L1131.4 664.2 L1132.8 663.8 L1134.1 655.5 L1135.5 658.8 L1136.8 662.1 L1138.2 663.8 L1139.6 661.5 L1140.9 661.7 L1142.3 663.6 L1143.6 664.5 L1145.0 664.7 L1146.3 660.3 L1147.7 661.1 L1149.1 663.3 L1150.4 664.4 L1151.8 662.7 L1153.1 663.5 L1154.5 664.5 L1155.9 665.0 L1157.2 665.1 L1158.6 663.2 L1159.9 647.7 L1161.3 653.5 L1162.7 659.4 L1164.0 659.5 L1165.4 662.5 L1166.7 663.0 L1168.1 654.0 L1169.5 659.7 L1170.8 662.6 L1172.2 648.0 L1173.5 653.2 L1174.9 658.6 L1176.2 650.7 L1177.6 659.3 L1179.0 656.9 L1180.3 660.9 L1181.7 663.1 L1183.0 663.6 L1184.4 645.9 L1185.8 650.7 L1187.1 658.0 L1188.5 661.7 L1189.8 659.6 L1191.2 661.5 L1192.6 663.4 L1193.9 653.8 L1195.3 639.9 L1196.6 649.5 L1198.0 654.5 L1199.4 633.9 L1200.7 646.5 L1202.1 653.2 L1203.4 659.3 L1204.8 658.5 L1206.1 660.4 L1207.5 662.9 L1208.9 664.2 L1210.2 661.2 L1211.6 663.3 L1212.9 664.4 L1214.3 664.9 L1215.7 664.0 L1217.0 661.6 L1218.4 663.5 L1219.7 664.5 L1221.1 664.4 L1222.5 655.5 L1223.8 657.5 L1225.2 655.5 L1226.5 639.3 L1227.9 654.5 L1229.3 652.3 L1230.6 658.8 L1232.0 656.9 L1233.3 660.9 L1234.7 656.7 L1236.0 659.1 L1237.4 662.3 L1238.8 655.0 L1240.1 660.2 L1241.5 657.3 L1242.8 634.5 L1244.2 650.7 L1245.6 649.5 L1246.9 658.6 L1248.3 662.0 L1249.6 660.3 L1251.0 662.8 L1252.4 664.2 L1253.7 664.8 L1255.1 662.0 L1256.4 663.7 L1257.8 664.6 L1259.1 663.8 L1260.5 661.8 L1261.9 663.6 L1263.2 662.0 L1264.6 646.4 L1265.9 655.5 L1267.3 660.5 L1268.7 661.2 L1270.0 661.4 L1271.4 641.7 L1272.7 651.6 L1274.1 658.5 L1275.5 659.8 L1276.8 662.6 L1278.2 664.0 L1279.5 663.5 L1280.9 663.2 L1282.3 664.3 L1283.6 664.9 L1285.0 665.1 L1286.3 662.7 L1287.7 662.1 L1289.0 663.8 L1290.4 663.0 L1291.8 649.5 L1293.1 655.2 L1294.5 605.7 L1295.8 626.9 L1297.2 637.5 L1298.6 651.8 L1299.9 654.6 L1301.3 659.2 L1302.6 662.3 L1304.0 663.9 L1305.4 661.5 L1306.7 663.5 L1308.1 664.5 L1309.4 665.0 L1310.8 665.1 L1312.2 662.1 L1313.5 661.7 L1314.9 658.2 L1316.2 637.5 L1317.6 599.1 L1318.9 620.7 L1320.3 634.5 L1321.7 651.1 L1323.0 650.7 L1324.4 658.0 L1325.7 661.7 L1327.1 659.8 L1328.5 662.6 L1329.8 664.0 L1331.2 664.8 L1332.5 663.5 L1333.9 663.2 L1335.3 664.3 L1336.6 663.9 L1338.0 656.8 L1339.3 660.9 L1340.7 660.0 L1342.1 652.5 L1343.4 650.7 L1344.8 654.1 L1346.1 623.7 L1347.5 634.4 L1348.8 649.5 L1350.2 655.6 L1351.6 655.5 L1352.9 657.9 L1354.3 652.5 L1355.6 657.9 L1357.0 645.3 L1357.0 667.5 L988.7 667.5 Z" fill="#e27625" fill-opacity="0.25"/>
<path d="M988.7 661.4 L990.1 616.5 L991.4 658.3 L992.8 656.7 L994.1 577.5 L995.5 464.5 L996.9 547.5 L998.2 645.9 L999.6 607.5 L1000.9 656.7 L1002.3 622.5 L1003.6 659.4 L1005.0 665.1 L1006.4 647.5 L1007.7 663.9 L1009.1 667.5 L1010.4 666.1 L1011.8 655.5 L1013.2 665.3 L1014.5 654.5 L1015.9 665.2 L1017.2 663.2 L1018.6 657.5 L1020.0 665.7 L1021.3 665.2 L1022.7 648.5 L1024.0 664.1 L1025.4 667.5 L1026.8 667.5 L1028.1 662.1 L1029.5 622.5 L1030.8 659.4 L1032.2 604.5 L1033.5 656.2 L1034.9 637.5 L1036.3 661.3 L1037.6 615.5 L1039.0 658.1 L1040.3 665.3 L1041.7 649.5 L1043.1 664.3 L1044.4 667.5 L1045.8 652.0 L1047.1 538.5 L1048.5 617.5 L1049.9 658.5 L1051.2 664.5 L1052.6 642.5 L1053.9 661.7 L1055.3 619.5 L1056.7 658.9 L1058.0 647.5 L1059.4 661.6 L1060.7 618.5 L1062.1 658.7 L1063.4 637.5 L1064.8 662.1 L1066.2 652.5 L1067.5 664.8 L1068.9 667.5 L1070.2 663.9 L1071.6 637.5 L1073.0 658.6 L1074.3 593.5 L1075.7 632.5 L1077.0 661.2 L1078.4 667.5 L1079.8 661.3 L1081.1 615.5 L1082.5 658.1 L1083.8 652.5 L1085.2 664.8 L1086.6 665.8 L1087.9 653.5 L1089.3 666.4 L1090.6 666.3 L1092.0 657.5 L1093.3 665.7 L1094.7 666.5 L1096.1 659.5 L1097.4 666.1 L1098.8 667.5 L1100.1 667.5 L1101.5 664.3 L1102.9 640.5 L1104.2 665.7 L1105.6 667.5 L1106.9 662.7 L1108.3 627.5 L1109.7 607.5 L1111.0 656.7 L1112.4 584.5 L1113.7 622.5 L1115.1 659.4 L1116.4 665.1 L1117.8 647.5 L1119.2 663.2 L1120.5 667.5 L1121.9 667.5 L1123.2 664.1 L1124.6 639.5 L1126.0 662.5 L1127.3 655.5 L1128.7 665.3 L1130.0 667.5 L1131.4 667.5 L1132.8 665.1 L1134.1 647.5 L1135.5 664.3 L1136.8 667.5 L1138.2 666.3 L1139.6 657.5 L1140.9 665.7 L1142.3 667.5 L1143.6 664.9 L1145.0 666.1 L1146.3 655.5 L1147.7 665.3 L1149.1 667.5 L1150.4 666.8 L1151.8 661.5 L1153.1 666.4 L1154.5 667.5 L1155.9 667.5 L1157.2 667.5 L1158.6 663.5 L1159.9 634.5 L1161.3 661.6 L1162.7 666.3 L1164.0 657.5 L1165.4 665.7 L1166.7 665.1 L1168.1 647.5 L1169.5 663.9 L1170.8 662.6 L1172.2 635.0 L1173.5 661.6 L1174.9 664.1 L1176.2 639.5 L1177.6 662.5 L1179.0 652.5 L1180.3 664.8 L1181.7 667.5 L1183.0 663.2 L1184.4 631.5 L1185.8 661.0 L1187.1 667.5 L1188.5 666.1 L1189.8 655.5 L1191.2 665.3 L1192.6 667.5 L1193.9 662.0 L1195.3 621.5 L1196.6 637.5 L1198.0 660.8 L1199.4 611.5 L1200.7 632.5 L1202.1 661.2 L1203.4 665.7 L1204.8 652.5 L1206.1 664.8 L1207.5 667.5 L1208.9 666.5 L1210.2 659.5 L1211.6 666.1 L1212.9 667.5 L1214.3 667.5 L1215.7 666.5 L1217.0 659.5 L1218.4 666.1 L1219.7 667.5 L1221.1 665.1 L1222.5 647.5 L1223.8 663.9 L1225.2 661.9 L1226.5 620.5 L1227.9 659.0 L1229.3 642.5 L1230.6 663.0 L1232.0 652.5 L1233.3 663.0 L1234.7 649.5 L1236.0 664.3 L1237.4 665.2 L1238.8 648.5 L1240.1 664.1 L1241.5 660.9 L1242.8 612.5 L1244.2 657.6 L1245.6 637.5 L1246.9 662.1 L1248.3 666.1 L1249.6 655.5 L1251.0 665.0 L1252.4 666.0 L1253.7 666.8 L1255.1 661.5 L1256.4 666.4 L1257.8 667.5 L1259.1 666.5 L1260.5 659.5 L1261.9 666.1 L1263.2 663.6 L1264.6 635.0 L1265.9 661.6 L1267.3 666.3 L1268.7 657.5 L1270.0 662.3 L1271.4 624.5 L1272.7 659.8 L1274.1 666.1 L1275.5 655.5 L1276.8 665.3 L1278.2 666.8 L1279.5 661.5 L1280.9 666.4 L1282.3 667.5 L1283.6 667.5 L1285.0 666.5 L1286.3 659.5 L1287.7 663.5 L1289.0 667.5 L1290.4 663.9 L1291.8 637.5 L1293.1 655.1 L1294.5 564.5 L1295.8 649.0 L1297.2 617.5 L1298.6 658.5 L1299.9 647.5 L1301.3 663.9 L1302.6 667.5 L1304.0 664.0 L1305.4 659.5 L1306.7 666.1 L1308.1 667.5 L1309.4 667.5 L1310.8 666.4 L1312.2 658.5 L1313.5 665.9 L1314.9 661.5 L1316.2 617.5 L1317.6 553.5 L1318.9 647.0 L1320.3 612.5 L1321.7 657.6 L1323.0 642.5 L1324.4 663.0 L1325.7 666.3 L1327.1 657.5 L1328.5 665.7 L1329.8 667.5 L1331.2 666.8 L1332.5 661.5 L1333.9 666.4 L1335.3 667.5 L1336.6 665.7 L1338.0 652.5 L1339.3 664.8 L1340.7 664.5 L1342.1 642.5 L1343.4 639.5 L1344.8 658.7 L1346.1 594.5 L1347.5 654.4 L1348.8 637.5 L1350.2 662.1 L1351.6 647.5 L1352.9 663.9 L1354.3 642.5 L1355.6 663.0 L1357.0 630.5 L1357.0 667.5 L988.7 667.5 Z" fill="#f3b94a" fill-opacity="0.3"/>
<path d="M988.7 660.8 L990.1 654.0 L991.4 648.6 L992.8 638.5 L994.1 620.6 L995.5 588.9 L996.9 580.5 L998.2 589.7 L999.6 602.0 L1000.9 616.0 L1002.3 622.9 L1003.6 634.0 L1005.0 641.5 L1006.4 646.3 L1007.7 651.2 L1009.1 654.7 L1010.4 657.3 L1011.8 659.1 L1013.2 660.4 L1014.5 661.3 L1015.9 661.9 L1017.2 662.5 L1018.6 662.9 L1020.0 663.0 L1021.3 662.9 L1022.7 662.0 L1024.0 662.0 L1025.4 662.3 L1026.8 662.2 L1028.1 660.9 L1029.5 656.1 L1030.8 652.3 L1032.2 648.0 L1033.5 644.9 L1034.9 645.7 L1036.3 648.6 L1037.6 647.1 L1039.0 647.0 L1040.3 651.3 L1041.7 653.4 L1043.1 654.8 L1044.4 654.0 L1045.8 646.4 L1047.1 624.6 L1048.5 629.6 L1049.9 634.6 L1051.2 640.9 L1052.6 644.5 L1053.9 647.4 L1055.3 644.1 L1056.7 647.6 L1058.0 648.9 L1059.4 648.6 L1060.7 646.5 L1062.1 649.3 L1063.4 650.3 L1064.8 653.8 L1066.2 655.9 L1067.5 657.8 L1068.9 658.6 L1070.2 657.1 L1071.6 654.0 L1073.0 649.2 L1074.3 642.2 L1075.7 644.0 L1077.0 647.6 L1078.4 650.7 L1079.8 650.2 L1081.1 647.0 L1082.5 651.5 L1083.8 654.4 L1085.2 656.9 L1086.6 658.8 L1087.9 659.9 L1089.3 660.8 L1090.6 661.7 L1092.0 662.3 L1093.3 662.8 L1094.7 663.1 L1096.1 663.3 L1097.4 663.5 L1098.8 663.4 L1100.1 663.1 L1101.5 661.6 L1102.9 659.7 L1104.2 660.5 L1105.6 660.2 L1106.9 657.5 L1108.3 650.5 L1109.7 643.4 L1111.0 637.8 L1112.4 630.4 L1113.7 633.5 L1115.1 639.9 L1116.4 646.0 L1117.8 649.4 L1119.2 653.1 L1120.5 656.0 L1121.9 657.8 L1123.2 658.5 L1124.6 656.6 L1126.0 658.3 L1127.3 659.9 L1128.7 661.0 L1130.0 661.8 L1131.4 662.2 L1132.8 662.2 L1134.1 661.1 L1135.5 661.6 L1136.8 662.3 L1138.2 662.7 L1139.6 663.1 L1140.9 663.3 L1142.3 663.5 L1143.6 663.7 L1145.0 663.8 L1146.3 663.8 L1147.7 663.9 L1149.1 663.9 L1150.4 663.9 L1151.8 663.9 L1153.1 663.9 L1154.5 663.9 L1155.9 663.8 L1157.2 663.5 L1158.6 662.5 L1159.9 659.3 L1161.3 659.0 L1162.7 660.4 L1164.0 661.3 L1165.4 661.8 L1166.7 661.8 L1168.1 660.5 L1169.5 661.1 L1170.8 660.8 L1172.2 658.2 L1173.5 657.3 L1174.9 657.1 L1176.2 656.7 L1177.6 658.5 L1179.0 659.3 L1180.3 660.5 L1181.7 661.1 L1183.0 660.8 L1184.4 658.3 L1185.8 657.1 L1187.1 659.0 L1188.5 660.3 L1189.8 661.2 L1191.2 661.4 L1192.6 660.6 L1193.9 656.6 L1195.3 652.7 L1196.6 651.2 L1198.0 648.5 L1199.4 643.5 L1200.7 645.0 L1202.1 648.7 L1203.4 652.8 L1204.8 655.3 L1206.1 657.6 L1207.5 659.3 L1208.9 660.6 L1210.2 661.6 L1211.6 662.2 L1212.9 662.7 L1214.3 663.1 L1215.7 663.3 L1217.0 663.5 L1218.4 663.6 L1219.7 663.5 L1221.1 663.1 L1222.5 661.8 L1223.8 660.2 L1225.2 657.1 L1226.5 653.2 L1227.9 654.9 L1229.3 654.8 L1230.6 657.1 L1232.0 658.2 L1233.3 659.4 L1234.7 659.5 L1236.0 660.1 L1237.4 660.5 L1238.8 659.6 L1240.1 659.5 L1241.5 656.6 L1242.8 649.5 L1244.2 651.4 L1245.6 652.1 L1246.9 655.4 L1248.3 657.8 L1249.6 659.5 L1251.0 660.7 L1252.4 661.6 L1253.7 662.3 L1255.1 662.8 L1256.4 663.1 L1257.8 663.3 L1259.1 663.5 L1260.5 663.5 L1261.9 663.1 L1263.2 661.9 L1264.6 657.8 L1265.9 659.4 L1267.3 660.4 L1268.7 660.7 L1270.0 659.6 L1271.4 654.3 L1272.7 656.2 L1274.1 658.3 L1275.5 659.9 L1276.8 661.0 L1278.2 661.9 L1279.5 662.4 L1280.9 662.9 L1282.3 663.2 L1283.6 663.4 L1285.0 663.6 L1286.3 663.6 L1287.7 663.6 L1289.0 663.2 L1290.4 661.8 L1291.8 657.3 L1293.1 653.1 L1294.5 640.2 L1295.8 635.6 L1297.2 635.5 L1298.6 642.8 L1299.9 647.0 L1301.3 651.5 L1302.6 655.0 L1304.0 657.5 L1305.4 659.3 L1306.7 660.6 L1308.1 661.5 L1309.4 662.1 L1310.8 662.5 L1312.2 662.4 L1313.5 661.2 L1314.9 656.8 L1316.2 645.8 L1317.6 634.2 L1318.9 627.7 L1320.3 629.3 L1321.7 637.9 L1323.0 642.2 L1324.4 648.2 L1325.7 652.6 L1327.1 655.7 L1328.5 658.0 L1329.8 659.7 L1331.2 660.9 L1332.5 661.7 L1333.9 662.3 L1335.3 662.7 L1336.6 662.8 L1338.0 662.2 L1339.3 662.1 L1340.7 660.8 L1342.1 658.7 L1343.4 657.0 L1344.8 654.4 L1346.1 648.6 L1347.5 643.7 L1348.8 645.5 L1350.2 649.4 L1351.6 651.7 L1352.9 652.8 L1354.3 652.5 L1355.6 652.9 L1357.0 652.0" fill="none" stroke="#e8312a" stroke-width="1"/>
<path d="M988.7 662.3 L990.1 636.9 L991.4 646.2 L992.8 643.6 L994.1 613.5 L995.5 545.7 L996.9 595.5 L998.2 622.1 L999.6 631.5 L1000.9 651.8 L1002.3 640.5 L1003.6 653.7 L1005.0 659.5 L1006.4 655.5 L1007.7 660.4 L1009.1 662.9 L1010.4 664.2 L1011.8 659.9 L1013.2 661.5 L1014.5 659.7 L1015.9 660.5 L1017.2 663.0 L1018.6 661.5 L1020.0 661.8 L1021.3 663.6 L1022.7 656.1 L1024.0 658.7 L1025.4 662.1 L1026.8 663.8 L1028.1 663.0 L1029.5 640.5 L1030.8 647.7 L1032.2 629.7 L1033.5 639.5 L1034.9 649.5 L1036.3 655.9 L1037.6 636.3 L1039.0 644.4 L1040.3 654.8 L1041.7 656.7 L1043.1 659.1 L1044.4 662.3 L1045.8 648.7 L1047.1 590.1 L1048.5 628.9 L1049.9 646.0 L1051.2 655.6 L1052.6 652.5 L1053.9 659.8 L1055.3 638.7 L1056.7 650.1 L1058.0 653.6 L1059.4 655.1 L1060.7 638.1 L1062.1 654.1 L1063.4 649.5 L1064.8 658.2 L1066.2 657.2 L1067.5 661.3 L1068.9 663.4 L1070.2 658.5 L1071.6 649.5 L1073.0 650.0 L1074.3 623.1 L1075.7 646.5 L1077.0 653.0 L1078.4 659.2 L1079.8 655.9 L1081.1 636.3 L1082.5 652.6 L1083.8 658.2 L1085.2 660.5 L1086.6 663.0 L1087.9 659.1 L1089.3 659.8 L1090.6 662.6 L1092.0 659.6 L1093.3 662.4 L1094.7 663.9 L1096.1 660.9 L1097.4 663.1 L1098.8 664.3 L1100.1 664.5 L1101.5 660.2 L1102.9 651.3 L1104.2 659.0 L1105.6 662.2 L1106.9 659.1 L1108.3 643.5 L1109.7 631.5 L1111.0 643.8 L1112.4 617.7 L1113.7 640.5 L1115.1 649.9 L1116.4 657.6 L1117.8 655.5 L1119.2 658.8 L1120.5 662.1 L1121.9 663.8 L1123.2 662.8 L1124.6 650.6 L1126.0 656.6 L1127.3 660.3 L1128.7 660.4 L1130.0 662.9 L1131.4 664.2 L1132.8 663.8 L1134.1 655.5 L1135.5 658.8 L1136.8 662.1 L1138.2 663.8 L1139.6 661.5 L1140.9 661.7 L1142.3 663.6 L1143.6 664.5 L1145.0 664.7 L1146.3 660.3 L1147.7 661.1 L1149.1 663.3 L1150.4 664.4 L1151.8 662.7 L1153.1 663.5 L1154.5 664.5 L1155.9 665.0 L1157.2 665.1 L1158.6 663.2 L1159.9 647.7 L1161.3 653.5 L1162.7 659.4 L1164.0 659.5 L1165.4 662.5 L1166.7 663.0 L1168.1 654.0 L1169.5 659.7 L1170.8 662.6 L1172.2 648.0 L1173.5 653.2 L1174.9 658.6 L1176.2 650.7 L1177.6 659.3 L1179.0 656.9 L1180.3 660.9 L1181.7 663.1 L1183.0 663.6 L1184.4 645.9 L1185.8 650.7 L1187.1 658.0 L1188.5 661.7 L1189.8 659.6 L1191.2 661.5 L1192.6 663.4 L1193.9 653.8 L1195.3 639.9 L1196.6 649.5 L1198.0 654.5 L1199.4 633.9 L1200.7 646.5 L1202.1 653.2 L1203.4 659.3 L1204.8 658.5 L1206.1 660.4 L1207.5 662.9 L1208.9 664.2 L1210.2 661.2 L1211.6 663.3 L1212.9 664.4 L1214.3 664.9 L1215.7 664.0 L1217.0 661.6 L1218.4 663.5 L1219.7 664.5 L1221.1 664.4 L1222.5 655.5 L1223.8 657.5 L1225.2 655.5 L1226.5 639.3 L1227.9 654.5 L1229.3 652.3 L1230.6 658.8 L1232.0 656.9 L1233.3 660.9 L1234.7 656.7 L1236.0 659.1 L1237.4 662.3 L1238.8 655.0 L1240.1 660.2 L1241.5 657.3 L1242.8 634.5 L1244.2 650.7 L1245.6 649.5 L1246.9 658.6 L1248.3 662.0 L1249.6 660.3 L1251.0 662.8 L1252.4 664.2 L1253.7 664.8 L1255.1 662.0 L1256.4 663.7 L1257.8 664.6 L1259.1 663.8 L1260.5 661.8 L1261.9 663.6 L1263.2 662.0 L1264.6 646.4 L1265.9 655.5 L1267.3 660.5 L1268.7 661.2 L1270.0 661.4 L1271.4 641.7 L1272.7 651.6 L1274.1 658.5 L1275.5 659.8 L1276.8 662.6 L1278.2 664.0 L1279.5 663.5 L1280.9 663.2 L1282.3 664.3 L1283.6 664.9 L1285.0 665.1 L1286.3 662.7 L1287.7 662.1 L1289.0 663.8 L1290.4 663.0 L1291.8 649.5 L1293.1 655.2 L1294.5 605.7 L1295.8 626.9 L1297.2 637.5 L1298.6 651.8 L1299.9 654.6 L1301.3 659.2 L1302.6 662.3 L1304.0 663.9 L1305.4 661.5 L1306.7 663.5 L1308.1 664.5 L1309.4 665.0 L1310.8 665.1 L1312.2 662.1 L1313.5 661.7 L1314.9 658.2 L1316.2 637.5 L1317.6 599.1 L1318.9 620.7 L1320.3 634.5 L1321.7 651.1 L1323.0 650.7 L1324.4 658.0 L1325.7 661.7 L1327.1 659.8 L1328.5 662.6 L1329.8 664.0 L1331.2 664.8 L1332.5 663.5 L1333.9 663.2 L1335.3 664.3 L1336.6 663.9 L1338.0 656.8 L1339.3 660.9 L1340.7 660.0 L1342.1 652.5 L1343.4 650.7 L1344.8 654.1 L1346.1 623.7 L1347.5 634.4 L1348.8 649.5 L1350.2 655.6 L1351.6 655.5 L1352.9 657.9 L1354.3 652.5 L1355.6 657.9 L1357.0 645.3" fill="none" stroke="#e8832a" stroke-width="1"/>
<path d="M988.7 661.4 L990.1 616.5 L991.4 658.3 L992.8 656.7 L994.1 577.5 L995.5 464.5 L996.9 547.5 L998.2 645.9 L999.6 607.5 L1000.9 656.7 L1002.3 622.5 L1003.6 659.4 L1005.0 665.1 L1006.4 647.5 L1007.7 663.9 L1009.1 667.5 L1010.4 666.1 L1011.8 655.5 L1013.2 665.3 L1014.5 654.5 L1015.9 665.2 L1017.2 663.2 L1018.6 657.5 L1020.0 665.7 L1021.3 665.2 L1022.7 648.5 L1024.0 664.1 L1025.4 667.5 L1026.8 667.5 L1028.1 662.1 L1029.5 622.5 L1030.8 659.4 L1032.2 604.5 L1033.5 656.2 L1034.9 637.5 L1036.3 661.3 L1037.6 615.5 L1039.0 658.1 L1040.3 665.3 L1041.7 649.5 L1043.1 664.3 L1044.4 667.5 L1045.8 652.0 L1047.1 538.5 L1048.5 617.5 L1049.9 658.5 L1051.2 664.5 L1052.6 642.5 L1053.9 661.7 L1055.3 619.5 L1056.7 658.9 L1058.0 647.5 L1059.4 661.6 L1060.7 618.5 L1062.1 658.7 L1063.4 637.5 L1064.8 662.1 L1066.2 652.5 L1067.5 664.8 L1068.9 667.5 L1070.2 663.9 L1071.6 637.5 L1073.0 658.6 L1074.3 593.5 L1075.7 632.5 L1077.0 661.2 L1078.4 667.5 L1079.8 661.3 L1081.1 615.5 L1082.5 658.1 L1083.8 652.5 L1085.2 664.8 L1086.6 665.8 L1087.9 653.5 L1089.3 666.4 L1090.6 666.3 L1092.0 657.5 L1093.3 665.7 L1094.7 666.5 L1096.1 659.5 L1097.4 666.1 L1098.8 667.5 L1100.1 667.5 L1101.5 664.3 L1102.9 640.5 L1104.2 665.7 L1105.6 667.5 L1106.9 662.7 L1108.3 627.5 L1109.7 607.5 L1111.0 656.7 L1112.4 584.5 L1113.7 622.5 L1115.1 659.4 L1116.4 665.1 L1117.8 647.5 L1119.2 663.2 L1120.5 667.5 L1121.9 667.5 L1123.2 664.1 L1124.6 639.5 L1126.0 662.5 L1127.3 655.5 L1128.7 665.3 L1130.0 667.5 L1131.4 667.5 L1132.8 665.1 L1134.1 647.5 L1135.5 664.3 L1136.8 667.5 L1138.2 666.3 L1139.6 657.5 L1140.9 665.7 L1142.3 667.5 L1143.6 664.9 L1145.0 666.1 L1146.3 655.5 L1147.7 665.3 L1149.1 667.5 L1150.4 666.8 L1151.8 661.5 L1153.1 666.4 L1154.5 667.5 L1155.9 667.5 L1157.2 667.5 L1158.6 663.5 L1159.9 634.5 L1161.3 661.6 L1162.7 666.3 L1164.0 657.5 L1165.4 665.7 L1166.7 665.1 L1168.1 647.5 L1169.5 663.9 L1170.8 662.6 L1172.2 635.0 L1173.5 661.6 L1174.9 664.1 L1176.2 639.5 L1177.6 662.5 L1179.0 652.5 L1180.3 664.8 L1181.7 667.5 L1183.0 663.2 L1184.4 631.5 L1185.8 661.0 L1187.1 667.5 L1188.5 666.1 L1189.8 655.5 L1191.2 665.3 L1192.6 667.5 L1193.9 662.0 L1195.3 621.5 L1196.6 637.5 L1198.0 660.8 L1199.4 611.5 L1200.7 632.5 L1202.1 661.2 L1203.4 665.7 L1204.8 652.5 L1206.1 664.8 L1207.5 667.5 L1208.9 666.5 L1210.2 659.5 L1211.6 666.1 L1212.9 667.5 L1214.3 667.5 L1215.7 666.5 L1217.0 659.5 L1218.4 666.1 L1219.7 667.5 L1221.1 665.1 L1222.5 647.5 L1223.8 663.9 L1225.2 661.9 L1226.5 620.5 L1227.9 659.0 L1229.3 642.5 L1230.6 663.0 L1232.0 652.5 L1233.3 663.0 L1234.7 649.5 L1236.0 664.3 L1237.4 665.2 L1238.8 648.5 L1240.1 664.1 L1241.5 660.9 L1242.8 612.5 L1244.2 657.6 L1245.6 637.5 L1246.9 662.1 L1248.3 666.1 L1249.6 655.5 L1251.0 665.0 L1252.4 666.0 L1253.7 666.8 L1255.1 661.5 L1256.4 666.4 L1257.8 667.5 L1259.1 666.5 L1260.5 659.5 L1261.9 666.1 L1263.2 663.6 L1264.6 635.0 L1265.9 661.6 L1267.3 666.3 L1268.7 657.5 L1270.0 662.3 L1271.4 624.5 L1272.7 659.8 L1274.1 666.1 L1275.5 655.5 L1276.8 665.3 L1278.2 666.8 L1279.5 661.5 L1280.9 666.4 L1282.3 667.5 L1283.6 667.5 L1285.0 666.5 L1286.3 659.5 L1287.7 663.5 L1289.0 667.5 L1290.4 663.9 L1291.8 637.5 L1293.1 655.1 L1294.5 564.5 L1295.8 649.0 L1297.2 617.5 L1298.6 658.5 L1299.9 647.5 L1301.3 663.9 L1302.6 667.5 L1304.0 664.0 L1305.4 659.5 L1306.7 666.1 L1308.1 667.5 L1309.4 667.5 L1310.8 666.4 L1312.2 658.5 L1313.5 665.9 L1314.9 661.5 L1316.2 617.5 L1317.6 553.5 L1318.9 647.0 L1320.3 612.5 L1321.7 657.6 L1323.0 642.5 L1324.4 663.0 L1325.7 666.3 L1327.1 657.5 L1328.5 665.7 L1329.8 667.5 L1331.2 666.8 L1332.5 661.5 L1333.9 666.4 L1335.3 667.5 L1336.6 665.7 L1338.0 652.5 L1339.3 664.8 L1340.7 664.5 L1342.1 642.5 L1343.4 639.5 L1344.8 658.7 L1346.1 594.5 L1347.5 654.4 L1348.8 637.5 L1350.2 662.1 L1351.6 647.5 L1352.9 663.9 L1354.3 642.5 L1355.6 663.0 L1357.0 630.5" fill="none" stroke="#f5c91c" stroke-width="1.1"/>
<path d="M962.5 448 V667.5 H1357.5" fill="none" stroke="#222" stroke-width="1.3"/>
<line x1="988.7" y1="667.3" x2="1357" y2="667.3" stroke="#e8832a" stroke-width="0.9" stroke-dasharray="2 1"/>
<line x1="959.5" y1="667.5" x2="962.5" y2="667.5" stroke="#222" stroke-width="1.2"/>
<line x1="959.5" y1="647.5" x2="962.5" y2="647.5" stroke="#222" stroke-width="1.2"/>
<line x1="959.5" y1="627.5" x2="962.5" y2="627.5" stroke="#222" stroke-width="1.2"/>
<line x1="959.5" y1="607.5" x2="962.5" y2="607.5" stroke="#222" stroke-width="1.2"/>
<line x1="959.5" y1="587.5" x2="962.5" y2="587.5" stroke="#222" stroke-width="1.2"/>
<line x1="959.5" y1="567.5" x2="962.5" y2="567.5" stroke="#222" stroke-width="1.2"/>
<line x1="959.5" y1="547.5" x2="962.5" y2="547.5" stroke="#222" stroke-width="1.2"/>
<line x1="959.5" y1="527.5" x2="962.5" y2="527.5" stroke="#222" stroke-width="1.2"/>
<line x1="959.5" y1="507.5" x2="962.5" y2="507.5" stroke="#222" stroke-width="1.2"/>
<line x1="959.5" y1="487.5" x2="962.5" y2="487.5" stroke="#222" stroke-width="1.2"/>
<line x1="959.5" y1="467.5" x2="962.5" y2="467.5" stroke="#222" stroke-width="1.2"/>
<line x1="959.5" y1="447.5" x2="962.5" y2="447.5" stroke="#222" stroke-width="1.2"/>
<line x1="1001.5" y1="667.5" x2="1001.5" y2="676" stroke="#222" stroke-width="1.3"/>
<line x1="1099.5" y1="667.5" x2="1099.5" y2="676" stroke="#222" stroke-width="1.3"/>
<line x1="1198.5" y1="667.5" x2="1198.5" y2="676" stroke="#222" stroke-width="1.3"/>
<line x1="1296.5" y1="667.5" x2="1296.5" y2="676" stroke="#222" stroke-width="1.3"/>
</svg>
<div class="t ax" style="right:482.7px;top:664.2px">0</div>
<div class="t ax" style="right:482.7px;top:644.2px">0.2</div>
<div class="t ax" style="right:482.7px;top:624.2px">0.4</div>
<div class="t ax" style="right:482.7px;top:604.2px">0.6</div>
<div class="t ax" style="right:482.7px;top:584.2px">0.8</div>
<div class="t ax" style="right:482.7px;top:564.2px">1</div>
<div class="t ax" style="right:482.7px;top:544.2px">1.2</div>
<div class="t ax" style="right:482.7px;top:524.2px">1.4</div>
<div class="t ax" style="right:482.7px;top:504.2px">1.6</div>
<div class="t ax" style="right:482.7px;top:484.2px">1.8</div>
<div class="t ax" style="right:482.7px;top:464.2px">2</div>
<div class="t ax" style="right:482.7px;top:444.2px">2.2</div>
<div class="t ax" style="left:961.5px;width:80px;text-align:center;top:679px">12:00 PM</div>
<div class="t ax" style="left:1059.5px;width:80px;text-align:center;top:679px">6:00 PM</div>
<div class="t ax" style="left:1158.5px;width:80px;text-align:center;top:679px">12:00 AM</div>
<div class="t ax" style="left:1256.5px;width:80px;text-align:center;top:679px">6:00 AM</div>
</div>
<!-- legend -->
<div class="a" style="left:922px;top:702px;width:9px;height:44px;background:#ed1c24"></div>
<div class="a" style="left:1084px;top:702px;width:9px;height:44px;background:#e27a25"></div>
<div class="a" style="left:1245.3px;top:702px;width:9px;height:44px;background:#f0d22f"></div>
<div class="t lg" style="left:935px;top:704px">Average Load Last 15 Minu...</div>
<div class="t lg" style="left:935px;top:720.3px">Min: <b>N/A</b>&nbsp;&nbsp;<span style="margin-left:1px">Max:</span> <b>N/A</b></div>
<div class="t lg" style="left:935px;top:737.2px">Avg: <b>0.14</b></div>
<div class="t lg" style="left:1097px;top:704px">Average Load Last 5 Minutes</div>
<div class="t lg" style="left:1097px;top:720.3px">Min: <b>N/A</b>&nbsp;&nbsp;<span style="margin-left:1px">Max:</span> <b>N/A</b></div>
<div class="t lg" style="left:1097px;top:737.2px">Avg: <b>0.13</b></div>
<div class="t lg" style="left:1259px;top:704px">Average Load Last Minute</div>
<div class="t lg" style="left:1259px;top:720.3px">Min: <b>N/A</b>&nbsp;&nbsp;<span style="margin-left:1px">Max:</span> <b>N/A</b></div>
<div class="t lg" style="left:1259px;top:737.2px">Avg: <b>0.13</b></div>
<!-- fullscreen -->
<div class="a" style="left:1396px;top:751px;width:37px;height:31px;background:#050a14;border-radius:4px"></div>
<svg class="a" style="left:1396px;top:751px" width="37" height="31" viewBox="0 0 37 31">
  <path d="M7 11.5 V5.3 H13 M24 5.3 H30 V11.5 M30 18 V24.4 H24 M13 24.4 H7 V18" fill="none" stroke="#fff" stroke-width="2"/>
  <rect x="11.6" y="9.4" width="14.3" height="10.9" fill="none" stroke="#fff" stroke-width="3.4"/>
</svg>

</body></html>
